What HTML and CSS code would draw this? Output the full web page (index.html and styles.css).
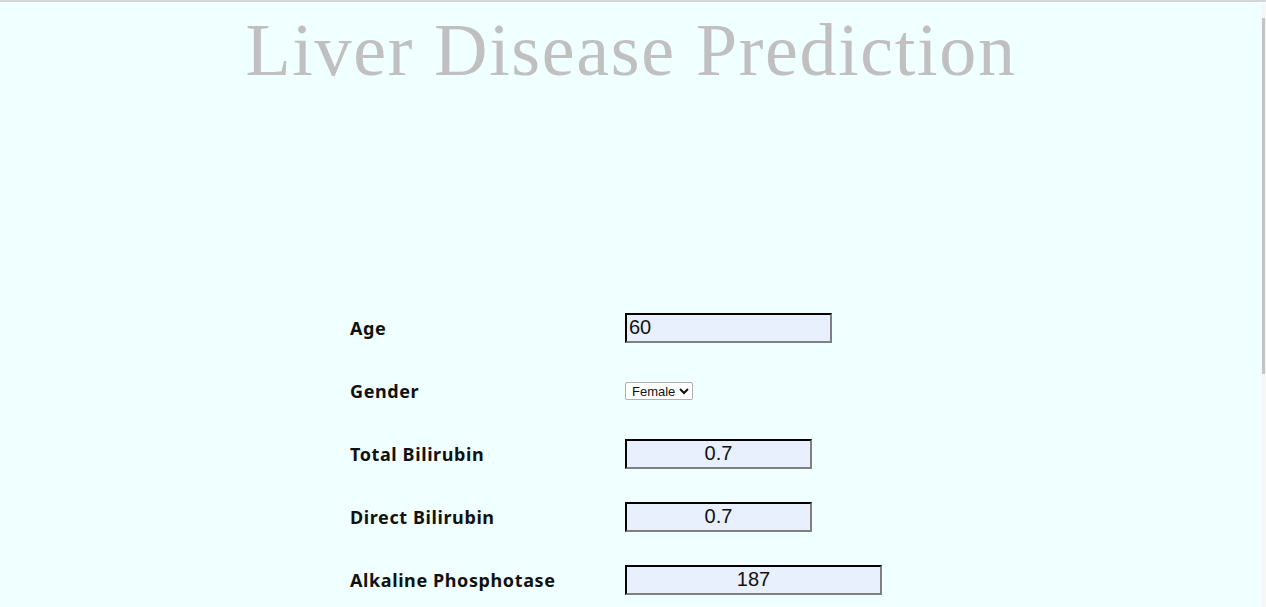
FILE: index.html
```html
<!DOCTYPE html>
<html lang="en">
<head>
<meta charset="utf-8">
<title>Liver Disease Prediction</title>
<link rel="stylesheet" href="styles.css">
</head>
<body>
<div class="page">
  <h1 class="title">Liver Disease Prediction</h1>
  <form class="form">
    <div class="row">
      <label class="label" for="age">Age</label>
      <input class="field field-age" id="age" type="text" value="60">
    </div>
    <div class="row">
      <label class="label" for="gender">Gender</label>
      <select class="select" id="gender">
        <option>Female</option>
        <option>Male</option>
      </select>
    </div>
    <div class="row">
      <label class="label" for="tb">Total Bilirubin</label>
      <input class="field field-center field-short" id="tb" type="text" value="0.7">
    </div>
    <div class="row">
      <label class="label" for="db">Direct Bilirubin</label>
      <input class="field field-center field-short" id="db" type="text" value="0.7">
    </div>
    <div class="row">
      <label class="label" for="ap">Alkaline Phosphotase</label>
      <input class="field field-center field-long" id="ap" type="text" value="187">
    </div>
  </form>
</div>
<div class="scrollbar"><div class="thumb"></div></div>
</body>
</html>
```
FILE: styles.css
```css
html, body {
  margin: 0;
  padding: 0;
  height: 100%;
  overflow: hidden;
}
body {
  background: #f0ffff;
  border-top: 2px solid #d6d6d6;
  box-sizing: border-box;
}
.page {
  padding-right: 4px;
}
.title {
  margin: 0;
  padding-top: 8px;
  text-align: center;
  font-family: "Liberation Serif", serif;
  font-weight: normal;
  font-size: 74px;
  line-height: 80px;
  color: #c0c0c0;
  letter-spacing: 1.65px;
}
.form {
  padding: 206px 0 0 350px;
  display: flex;
  flex-direction: column;
}
.row {
  display: grid;
  grid-template-columns: 275px auto;
  align-items: center;
  height: 63px;
  justify-items: start;
}
.label {
  font-family: "Noto Sans", "Open Sans", sans-serif;
  font-weight: bold;
  font-size: 18px;
  letter-spacing: 0.6px;
  color: #111;
}
.field {
  box-sizing: border-box;
  height: 30px;
  margin: 0;
  padding: 0 2px;
  border: 2px inset #767676;
  border-top-color: #333;
  border-left-color: #333;
  border-right-color: #808080;
  border-bottom-color: #808080;
  background: #e8f0fe;
  font-family: "Liberation Sans", Arial, sans-serif;
  font-size: 20px;
  color: #111;
  outline: none;
}
.field-age { width: 207px; }
.field-short { width: 187px; }
.field-long { width: 257px; }
.field-center { text-align: center; }
.select {
  box-sizing: border-box;
  height: 18px;
  width: 68px;
  margin: 0;
  padding: 0 0 0 2px;
  font-family: "Liberation Sans", Arial, sans-serif;
  font-size: 13px;
  color: #111;
  background: #fff;
  border: 1px solid #b0b0b0;
  border-radius: 2px;
}
.scrollbar {
  position: fixed;
  top: 4px;
  right: 0;
  bottom: 0;
  width: 5px;
  background: #f6f8f8;
}
.thumb {
  position: absolute;
  top: 14px;
  left: 1px;
  width: 3px;
  height: 356px;
  background: #c4c4c4;
}
```
